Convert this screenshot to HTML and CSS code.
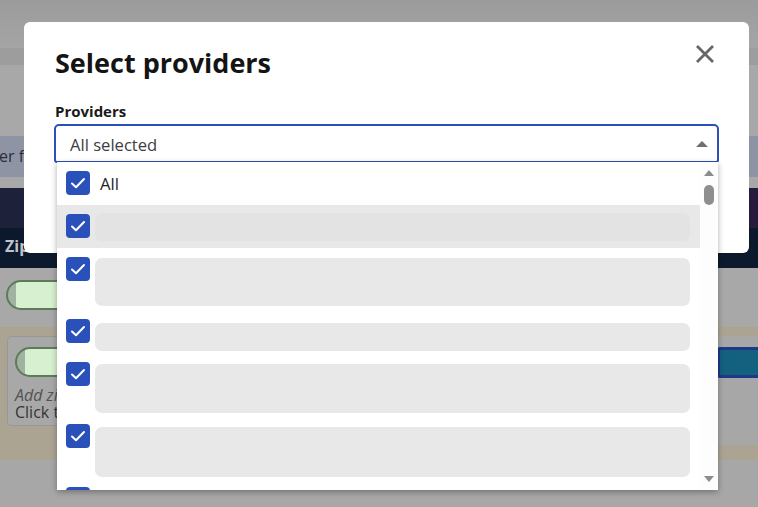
FILE: index.html
```html
<!DOCTYPE html>
<html lang="en">
<head>
<meta charset="utf-8">
<title>Select providers</title>
<link rel="stylesheet" href="styles.css">
</head>
<body>
<div class="app">
  <header class="app-top"></header>
  <div class="app-band"></div>
  <div class="app-space"></div>
  <div class="filter-bar"><span class="filter-text">er filters</span></div>
  <div class="app-gap"></div>
  <nav class="app-nav"></nav>
  <div class="table-head"><span class="th">Zip codes</span></div>
  <div class="row-a"><span class="pill"></span></div>
  <div class="row-b">
    <div class="zone-card">
      <span class="pill"></span>
      <div class="zone-hint"><em class="hint-em">Add zip</em><span class="hint-line">Click to</span></div>
    </div>
    <div class="action-cell"><span class="action-btn"></span></div>
  </div>
</div>

<div class="modal" role="dialog">
  <div class="modal-head">
    <h2 class="modal-title">Select providers</h2>
    <button class="close-btn" aria-label="Close">
      <svg width="20" height="20" viewBox="0 0 20 20"><path d="M2 2L18 18M18 2L2 18" stroke="#666" stroke-width="2.8" fill="none"/></svg>
    </button>
  </div>
  <div class="field-label">Providers</div>
  <div class="select-wrap">
    <div class="select-box">
      <span class="select-value">All selected</span>
      <svg class="select-arrow" width="12" height="6" viewBox="0 0 12 6"><polygon points="0,6 6,0 12,6" fill="#707070"/></svg>
    </div>
    <div class="dropdown">
      <div class="opt-list">
        <div class="opt">
          <span class="cb"><svg width="24" height="24" viewBox="0 0 24 24"><path d="M6 12.5L10 16.2L18 8" stroke="#fff" stroke-width="2" fill="none" stroke-linecap="round" stroke-linejoin="round"/></svg></span>
          <span class="opt-text">All</span>
        </div>
        <div class="opt hl">
          <span class="cb"><svg width="24" height="24" viewBox="0 0 24 24"><path d="M6 12.5L10 16.2L18 8" stroke="#fff" stroke-width="2" fill="none" stroke-linecap="round" stroke-linejoin="round"/></svg></span>
          <span class="ph ph-2"></span>
        </div>
        <div class="opt tall">
          <span class="cb"><svg width="24" height="24" viewBox="0 0 24 24"><path d="M6 12.5L10 16.2L18 8" stroke="#fff" stroke-width="2" fill="none" stroke-linecap="round" stroke-linejoin="round"/></svg></span>
          <span class="ph ph-3"></span>
        </div>
        <div class="opt">
          <span class="cb"><svg width="24" height="24" viewBox="0 0 24 24"><path d="M6 12.5L10 16.2L18 8" stroke="#fff" stroke-width="2" fill="none" stroke-linecap="round" stroke-linejoin="round"/></svg></span>
          <span class="ph ph-4"></span>
        </div>
        <div class="opt tall">
          <span class="cb"><svg width="24" height="24" viewBox="0 0 24 24"><path d="M6 12.5L10 16.2L18 8" stroke="#fff" stroke-width="2" fill="none" stroke-linecap="round" stroke-linejoin="round"/></svg></span>
          <span class="ph ph-5"></span>
        </div>
        <div class="opt taller">
          <span class="cb"><svg width="24" height="24" viewBox="0 0 24 24"><path d="M6 12.5L10 16.2L18 8" stroke="#fff" stroke-width="2" fill="none" stroke-linecap="round" stroke-linejoin="round"/></svg></span>
          <span class="ph ph-6"></span>
        </div>
        <div class="opt">
          <span class="cb"><svg width="24" height="24" viewBox="0 0 24 24"><path d="M6 12.5L10 16.2L18 8" stroke="#fff" stroke-width="2" fill="none" stroke-linecap="round" stroke-linejoin="round"/></svg></span>
          <span class="ph ph-4"></span>
        </div>
      </div>
      <div class="scrollbar">
        <svg class="sb-arrow" width="10" height="6" viewBox="0 0 10 6"><polygon points="0,6 5,0 10,6" fill="#8c8c8c"/></svg>
        <span class="sb-thumb"></span>
        <svg class="sb-arrow sb-down" width="10" height="6" viewBox="0 0 10 6"><polygon points="0,0 10,0 5,6" fill="#8c8c8c"/></svg>
      </div>
    </div>
  </div>
</div>
</body>
</html>
```
FILE: styles.css
```css
html, body {
  margin: 0;
  padding: 0;
}
body {
  width: 758px;
  height: 507px;
  overflow: hidden;
  background: #a7a7a7;
  font-family: "Open Sans", "Noto Sans", sans-serif;
  font-size: 16px;
}

/* ---------- background app (dimmed) ---------- */
.app-top {
  height: 48px;
  background: linear-gradient(#9b9b9b, #a5a5a5);
}
.app-band {
  height: 17px;
  background: #9d9d9d;
}
.app-space {
  height: 71px;
  background: #a8a8a8;
}
.filter-bar {
  height: 41px;
  background: #8f94a4;
  line-height: 41px;
  white-space: nowrap;
  overflow: hidden;
}
.filter-text {
  color: #2b2e3a;
  margin-left: -1px;
}
.app-gap {
  height: 11px;
  background: #a8a8a8;
}
.app-nav {
  height: 40px;
  background: linear-gradient(90deg, #1d2139, #261a3d);
}
.table-head {
  height: 40px;
  background: #0c192d;
  color: #bfc3cb;
  font-weight: 700;
  line-height: 36px;
  padding-left: 5px;
  white-space: nowrap;
}
.row-a {
  height: 59px;
  box-sizing: border-box;
  padding: 12px 0 0 6px;
  background: #a8a8a8;
}
.pill {
  display: block;
  width: 80px;
  height: 30px;
  box-sizing: border-box;
  border: 2px solid #5b7b5b;
  border-radius: 15px;
  background: linear-gradient(90deg, #a2b2a2 0 8px, #d7f0cf 8px);
}
.row-b {
  height: 133px;
  box-sizing: border-box;
  padding: 9px 0 0 7px;
  background: #aca493;
  display: flex;
  align-items: flex-start;
}
.zone-card {
  width: 220px;
  height: 90px;
  box-sizing: border-box;
  border: 1px solid #979797;
  border-radius: 4px;
  background: #a8a8a8;
  padding: 10px 7px;
}
.zone-hint {
  margin-top: 10px;
  line-height: 17px;
  white-space: nowrap;
}
.hint-em {
  display: block;
  color: #525252;
}
.hint-line {
  display: block;
  color: #353535;
}
.action-cell {
  margin-left: auto;
  width: 60px;
  height: 109px;
  box-sizing: border-box;
  padding: 11px 0 0 19px;
  background: #a7a7a7;
}
.action-btn {
  display: block;
  width: 60px;
  height: 31px;
  box-sizing: border-box;
  border: 3px solid #1f3889;
  background: #14607f;
  border-radius: 3px;
}

/* ---------- modal ---------- */
.modal {
  position: fixed;
  top: 22px;
  left: 24px;
  width: 725px;
  height: 231px;
  box-sizing: border-box;
  padding: 22px 30px;
  background: #fff;
  border-radius: 6px;
}
.modal-head {
  display: flex;
  justify-content: space-between;
  align-items: flex-start;
}
.modal-title {
  margin: 0 0 0 1px;
  font-size: 27px;
  line-height: 38px;
  font-weight: 700;
  color: #141414;
}
.close-btn {
  margin: 0 4px 0 0;
  padding: 0;
  width: 20px;
  height: 20px;
  border: 0;
  background: none;
  display: block;
}
.close-btn svg {
  display: block;
}
.field-label {
  margin-top: 18px;
  font-size: 15px;
  line-height: 22px;
  font-weight: 700;
  color: #1a1a1a;
  padding-left: 1px;
}
.select-wrap {
  position: relative;
  margin-top: 2px;
}
.select-box {
  height: 39px;
  box-sizing: border-box;
  border: 2px solid #2d50b6;
  border-radius: 5px 5px 3px 3px;
  padding: 2px 9px 0 14px;
  display: flex;
  align-items: center;
  justify-content: space-between;
}
.select-value {
  color: #3d3d3d;
  font-size: 16.6px;
  line-height: 22px;
}
.select-arrow {
  display: block;
  margin-top: -2px;
}

/* ---------- dropdown ---------- */
.dropdown {
  position: absolute;
  top: 38px;
  left: 3px;
  right: 1px;
  height: 328px;
  background: #fff;
  box-shadow: 0 2px 6px rgba(0, 0, 0, 0.32);
  display: flex;
  overflow: hidden;
}
.opt-list {
  flex: 1;
  overflow: hidden;
}
.opt {
  height: 43px;
  box-sizing: border-box;
  padding: 9px 10px 0 9px;
  display: flex;
  align-items: flex-start;
  gap: 5px;
}
.opt.tall {
  height: 62px;
}
.opt.taller {
  height: 63px;
}
.opt.hl {
  background: #e8e8e8;
}
.cb {
  flex: none;
  width: 24px;
  height: 24px;
  border-radius: 4px;
  background: #2a50b9;
}
.cb svg {
  display: block;
}
.opt-text {
  margin-left: 5px;
  font-size: 16.8px;
  line-height: 24px;
  padding-top: 1px;
  color: #1e1e1e;
}
.ph {
  flex: 1;
  background: #e8e8e8;
  border-radius: 7px;
}
.hl .ph {
  background: #e3e3e3;
}
.ph-2 { margin-top: -1px; height: 28px; }
.ph-3 { margin-top: 1px; height: 48px; }
.ph-4 { margin-top: 4px; height: 28px; }
.ph-5 { margin-top: 2px; height: 49px; }
.ph-6 { margin-top: 3px; height: 50px; }

.scrollbar {
  flex: none;
  width: 18px;
  box-sizing: border-box;
  padding: 8px 0 8px;
  display: flex;
  flex-direction: column;
  align-items: center;
  background: #fdfdfd;
}
.sb-arrow {
  display: block;
  flex: none;
}
.sb-thumb {
  display: block;
  width: 10px;
  height: 20px;
  margin-top: 9px;
  border-radius: 5px;
  background: #8e8e8e;
}
.sb-down {
  margin-top: auto;
}
```
